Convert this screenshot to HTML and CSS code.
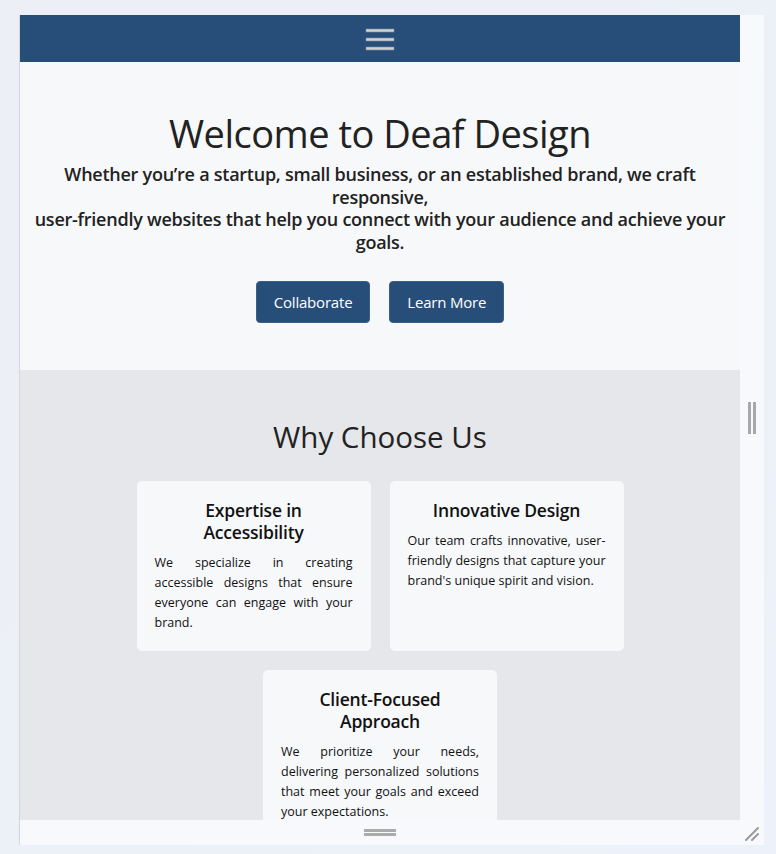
FILE: index.html
```html
<!DOCTYPE html>
<html lang="en">
<head>
<meta charset="utf-8">
<title>Deaf Design</title>
<link rel="stylesheet" href="styles.css">
</head>
<body>
<div class="frame">
  <div class="viewport">
    <header class="topbar">
      <svg class="burger" width="30" height="24" viewBox="0 0 30 24" aria-label="Menu">
        <rect x="1" y="2" width="28" height="3" fill="#cfd0d2" stroke="#7e8ea3" stroke-width="0.6"/>
        <rect x="1" y="11" width="28" height="3" fill="#cfd0d2" stroke="#7e8ea3" stroke-width="0.6"/>
        <rect x="1" y="20" width="28" height="3" fill="#cfd0d2" stroke="#7e8ea3" stroke-width="0.6"/>
      </svg>
    </header>
    <section class="hero">
      <h1 class="hero-title">Welcome to Deaf Design</h1>
      <p class="hero-sub">Whether you’re a startup, small business, or an established brand, we craft responsive,<br>user-friendly websites that help you connect with your audience and achieve your goals.</p>
      <div class="hero-actions">
        <a class="btn">Collaborate</a>
        <a class="btn">Learn More</a>
      </div>
    </section>
    <section class="why">
      <h2 class="why-title">Why Choose Us</h2>
      <div class="cards">
        <div class="card">
          <h3 class="card-title">Expertise in Accessibility</h3>
          <p class="card-text">We specialize in creating accessible designs that ensure everyone can engage with your brand.</p>
        </div>
        <div class="card">
          <h3 class="card-title">Innovative Design</h3>
          <p class="card-text">Our team crafts innovative, user-friendly designs that capture your brand's unique spirit and vision.</p>
        </div>
        <div class="card">
          <h3 class="card-title">Client-Focused Approach</h3>
          <p class="card-text">We prioritize your needs, delivering personalized solutions that meet your goals and exceed your expectations.</p>
        </div>
      </div>
    </section>
  </div>
  <div class="vhandle"><span class="vgrip"></span></div>
  <div class="hhandle"><span class="hgrip"></span></div>
  <div class="corner">
    <svg width="16" height="16" viewBox="0 0 16 16">
      <line x1="2" y1="15" x2="14" y2="3" stroke="#9a9a9a" stroke-width="2" stroke-linecap="round"/>
      <line x1="8" y1="15" x2="14" y2="9" stroke="#9a9a9a" stroke-width="2" stroke-linecap="round"/>
    </svg>
  </div>
</div>
</body>
</html>
```
FILE: styles.css
```css
* { box-sizing: border-box; }
html, body { margin: 0; padding: 0; }
body {
  width: 776px;
  height: 854px;
  overflow: hidden;
  background: linear-gradient(135deg, #eceff5 0%, #edf1f9 100%);
  font-family: "Open Sans", "Noto Sans", sans-serif;
  color: #222;
}
.frame {
  margin: 15px 0 0 19px;
  width: 745px;
  height: 830px;
  border-left: 1px solid #d3d6dc;
  display: grid;
  grid-template-columns: 720px 24px;
  grid-template-rows: 805px 25px;
  background: #f7f9fc;
}
.viewport {
  overflow: hidden;
  background: #f7f8fa;
}
.topbar {
  height: 47px;
  background: #274e78;
  display: flex;
  align-items: center;
  justify-content: center;
}
.burger { display: block; }
.hero {
  background: #f7f8fa;
  text-align: center;
  padding: 47px 8px 47px;
}
.hero-title {
  margin: 0;
  font-size: 38px;
  font-weight: 500;
  line-height: 48px;
  letter-spacing: -0.5px;
  color: #222;
}
.hero-sub {
  margin: 6px 0 0;
  font-size: 18px;
  font-weight: 600;
  line-height: 22.5px;
  letter-spacing: -0.25px;
  color: #222;
}
.hero-actions {
  margin-top: 28px;
  display: flex;
  justify-content: center;
  gap: 19px;
}
.btn {
  display: inline-flex;
  align-items: center;
  justify-content: center;
  height: 42px;
  padding: 0 17px;
  background: #274e78;
  color: #fff;
  font-size: 15px;
  letter-spacing: -0.2px;
  border-radius: 4px;
  border: 1px solid #3d5f86;
  text-decoration: none;
}
.why {
  background: #e6e7ea;
  padding: 50px 0 60px;
  text-align: center;
}
.why-title {
  margin: 0 0 27px;
  font-size: 29.5px;
  font-weight: 500;
  line-height: 34px;
  color: #222;
}
.cards {
  display: flex;
  flex-wrap: wrap;
  justify-content: center;
  gap: 19px;
}
.card {
  width: 234px;
  min-height: 168px;
  background: #f7f8fa;
  border-radius: 5px;
  padding: 18px 18px 18px;
}
.card-title {
  margin: 0 0 10px;
  font-size: 17.5px;
  font-weight: 600;
  line-height: 22px;
  letter-spacing: -0.2px;
  color: #111;
}
.card-text {
  margin: 0;
  text-align: justify;
  font-size: 12.5px;
  line-height: 20px;
  color: #111;
}
.vhandle {
  display: flex;
  align-items: center;
  justify-content: center;
  background: #f7f9fc;
}
.vgrip {
  width: 8px;
  height: 32px;
  border-left: 3px solid #a8a8a8;
  border-right: 3px solid #a8a8a8;
}
.hhandle {
  display: flex;
  align-items: center;
  justify-content: center;
  background: #f7f9fc;
}
.hgrip {
  width: 32px;
  height: 7px;
  border-top: 3px solid #ababab;
  border-bottom: 3px solid #ababab;
}
.corner {
  display: flex;
  align-items: center;
  justify-content: center;
  background: #f7f9fc;
}
```
